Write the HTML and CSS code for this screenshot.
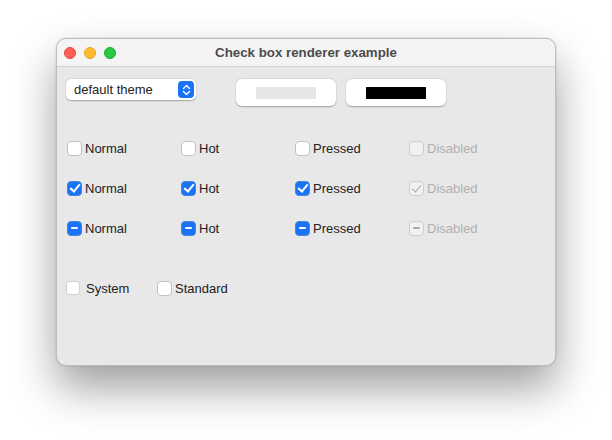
FILE: index.html
```html
<!DOCTYPE html>
<html lang="en">

<head>
    <meta charset="UTF-8">
    <title>Check box renderer example</title>
    <link rel="stylesheet" href="styles.css">
</head>

<body>
    <div class="window">
        <div class="titlebar">
            <div class="lights">
                <span class="light red"></span>
                <span class="light yellow"></span>
                <span class="light green"></span>
            </div>
            <div class="title">Check box renderer example</div>
        </div>
        <div class="content">
            <div class="toolbar">
                <div class="popup">
                    <span>default theme</span>
                    <span class="stepper">
                        <svg width="9" height="12" viewBox="0 0 9 12">
                            <path d="M1.5 4.5 L4.5 1.5 L7.5 4.5 M1.5 7.5 L4.5 10.5 L7.5 7.5" fill="none" stroke="#fff" stroke-width="1.4" stroke-linecap="round" stroke-linejoin="round"/>
                        </svg>
                    </span>
                </div>
                <div class="swatch-btn first"><span class="swatch light-swatch"></span></div>
                <div class="swatch-btn"><span class="swatch dark-swatch"></span></div>
            </div>

            <div class="grid">
                <label class="cb"><span class="box"></span>Normal</label>
                <label class="cb"><span class="box"></span>Hot</label>
                <label class="cb"><span class="box"></span>Pressed</label>
                <label class="cb disabled"><span class="box"></span>Disabled</label>

                <label class="cb"><span class="box on check"></span>Normal</label>
                <label class="cb"><span class="box on check"></span>Hot</label>
                <label class="cb"><span class="box on check"></span>Pressed</label>
                <label class="cb disabled"><span class="box check"></span>Disabled</label>

                <label class="cb"><span class="box on mixed"></span>Normal</label>
                <label class="cb"><span class="box on mixed"></span>Hot</label>
                <label class="cb"><span class="box on mixed"></span>Pressed</label>
                <label class="cb disabled"><span class="box mixed"></span>Disabled</label>
            </div>

            <div class="bottom">
                <label class="cb system"><span class="box"></span>System</label>
                <label class="cb"><span class="box"></span>Standard</label>
            </div>
        </div>
    </div>
</body>

</html>
```

FILE: styles.css
```css
* {
    padding: 0;
    margin: 0;
    box-sizing: border-box;
}

html,
body {
    height: 440px;
}

body {
    background: #fff;
    font-family: "Liberation Sans", Arial, sans-serif;
    font-size: 13px;
    color: #222;
    padding: 38px 0 0 56px;
}

.window {
    width: 500px;
    height: 328px;
    border-radius: 10px;
    background: #e8e8e8;
    border: 1px solid #bdbdbd;
    box-shadow: 0 22px 44px rgba(0, 0, 0, 0.38), 0 0 2px rgba(0, 0, 0, 0.2);
    overflow: hidden;
}

/* 标题栏 */

.titlebar {
    height: 28px;
    background: #f5f4f5;
    border-bottom: 1px solid #d2d2d2;
    display: flex;
    align-items: center;
    position: relative;
}

.lights {
    display: flex;
    gap: 8px;
    padding-left: 7px;
}

.light {
    width: 12px;
    height: 12px;
    border-radius: 50%;
}

.red {
    background: #fe5f57;
    border: 0.5px solid #e14640;
}

.yellow {
    background: #febc2e;
    border: 0.5px solid #dfa023;
}

.green {
    background: #28c840;
    border: 0.5px solid #1aab29;
}

.title {
    position: absolute;
    left: 0;
    right: 0;
    text-align: center;
    font-weight: bold;
    font-size: 13.3px;
    color: #4c4c4c;
    pointer-events: none;
}

/* 内容 */

.content {
    padding: 12px 0 0 9px;
}

.toolbar {
    display: flex;
    align-items: flex-start;
}

.popup {
    width: 130px;
    height: 21px;
    background: #fff;
    border-radius: 5px;
    box-shadow: 0 0.5px 1.5px rgba(0, 0, 0, 0.3);
    display: flex;
    align-items: center;
    justify-content: space-between;
    padding: 0 2px 0 8px;
    color: #222;
}

.stepper {
    width: 16px;
    height: 17px;
    border-radius: 4px;
    background: #1a73f5;
    display: flex;
    align-items: center;
    justify-content: center;
}

.swatch-btn {
    width: 100px;
    height: 27px;
    background: #fff;
    border-radius: 6px;
    box-shadow: 0 0.5px 1.5px rgba(0, 0, 0, 0.3);
    display: flex;
    align-items: center;
    justify-content: center;
    margin-left: 10px;
}

.swatch-btn.first {
    margin-left: 40px;
}

.swatch {
    width: 60px;
    height: 12px;
}

.light-swatch {
    background: #e6e6e6;
}

.dark-swatch {
    background: #000;
}

/* 复选框 */

.grid {
    display: grid;
    grid-template-columns: repeat(4, 114px);
    grid-auto-rows: 40px;
    margin-top: 22px;
    padding-left: 1px;
}

.cb {
    display: flex;
    align-items: center;
    gap: 3px;
}

.box {
    width: 15px;
    height: 15px;
    border-radius: 4px;
    background: #fff;
    border: 1px solid #c2c2c2;
    display: flex;
    align-items: center;
    justify-content: center;
}

.box.on {
    background: #1a73f5;
    border-color: #4a86d8;
}

.box.check::after {
    content: "";
    width: 4px;
    height: 8px;
    border: solid #fff;
    border-width: 0 2px 2px 0;
    transform: translate(0, -1px) rotate(40deg);
}

.box.mixed::after {
    content: "";
    width: 7px;
    height: 2px;
    border-radius: 1px;
    background: #fff;
}

.disabled {
    color: #b0b0b0;
}

.disabled .box {
    background: #f1f1f1;
    border-color: #cdcdcd;
}

.disabled .box.check::after {
    border-color: #a9a9a9;
    border-width: 0 1.5px 1.5px 0;
}

.disabled .box.mixed::after {
    background: #a9a9a9;
    height: 1.5px;
}

.bottom {
    display: flex;
    align-items: center;
    margin-top: 20px;
    height: 40px;
}

.system {
    gap: 6px;
    width: 91px;
}

.system .box {
    width: 14px;
    height: 14px;
    border-radius: 3px;
    border-color: #d0d0d0;
}
```
